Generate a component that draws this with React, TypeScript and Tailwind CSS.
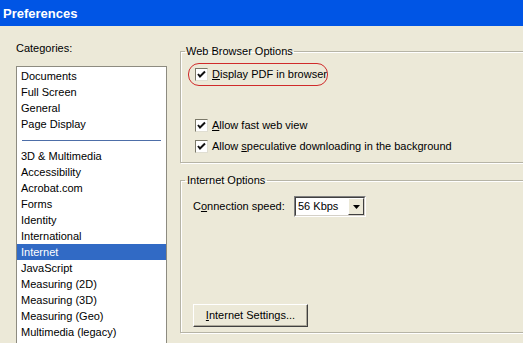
import React from 'react';

const groupA = ['Documents', 'Full Screen', 'General', 'Page Display'];
const groupB = [
  '3D & Multimedia',
  'Accessibility',
  'Acrobat.com',
  'Forms',
  'Identity',
  'International',
  'Internet',
  'JavaScript',
  'Measuring (2D)',
  'Measuring (3D)',
  'Measuring (Geo)',
  'Multimedia (legacy)',
  'Multimedia Trust (legacy)',
];

function CheckBox() {
  return (
    <span className="w-[13px] h-[13px] shrink-0 bg-white border border-t-[#7a7868] border-l-[#7a7868] border-b-[#e0ded2] border-r-[#e0ded2] flex items-center justify-center">
      <svg width="9" height="9" viewBox="0 0 9 9">
        <path d="M1 4 L3 6.5 L8 1.5" fill="none" stroke="#111" strokeWidth="2" />
      </svg>
    </span>
  );
}

function Label({ pre, u, post }: { pre: string; u: string; post: string }) {
  return (
    <span className="whitespace-nowrap">
      {pre}
      <span className="underline underline-offset-[1px]">{u}</span>
      {post}
    </span>
  );
}

export default function App() {
  return (
    <div
      className="w-[523px] h-[343px] overflow-hidden bg-[#ECE9D8] text-[11px] leading-[13px] text-black"
      style={{ fontFamily: '"Liberation Sans", Arial, sans-serif' }}
    >
      <div className="h-[26px] bg-[#0055E5] flex items-center pl-[3px]">
        <span className="text-white font-bold text-[13px]">Preferences</span>
      </div>

      <div className="flex w-[640px]">
        {/* categories */}
        <div className="pl-[16px] w-[180px] shrink-0">
          <div className="pt-[16px] h-[40px]">Categories:</div>
          <div className="w-[151px] h-[300px] bg-white border border-[#8d8b80] pt-[1px]">
            {groupA.map((c) => (
              <div key={c} className="h-[16px] leading-[16px] pl-[4px]">
                {c}
              </div>
            ))}
            <div className="h-[16px] flex items-center px-[5px]">
              <div className="h-px w-full bg-[#4d6ea8]" />
            </div>
            {groupB.map((c) => (
              <div
                key={c}
                className={`h-[16px] leading-[16px] pl-[4px] ${c === 'Internet' ? 'bg-[#316AC5] text-white' : ''}`}
              >
                {c}
              </div>
            ))}
          </div>
        </div>

        {/* options */}
        <div className="w-[420px] shrink-0 pt-[19px]">
          <fieldset className="border border-[#b6b4a6] shadow-[inset_1px_1px_0_#fff,1px_1px_0_#fff]">
            <legend className="ml-[4px] px-[1px] leading-[13px]">Web Browser Options</legend>
            <div className="pt-[5px] pb-[8px]">
              <div className="ml-[7px] w-[140px] h-[23px] rounded-[11px] border border-[#d02a2a] flex items-center gap-[4px] pl-[6px]">
                <CheckBox />
                <Label pre="" u="D" post="isplay PDF in browser" />
              </div>
              <div className="mt-[31px] pl-[14px] flex flex-col gap-[5px]">
                <div className="h-[16px] flex items-center gap-[4px]">
                  <CheckBox />
                  <Label pre="" u="A" post="llow fast web view" />
                </div>
                <div className="h-[16px] flex items-center gap-[4px]">
                  <CheckBox />
                  <Label pre="Allow " u="s" post="peculative downloading in the background" />
                </div>
              </div>
            </div>
          </fieldset>

          <fieldset className="mt-[11px] border border-[#b6b4a6] shadow-[inset_1px_1px_0_#fff,1px_1px_0_#fff]">
            <legend className="ml-[4px] px-[2px] leading-[13px]">Internet Options</legend>
            <div className="pt-[9px] pb-[5px] pl-[12px]">
              <div className="flex items-center">
                <span className="w-[101px]">
                  <Label pre="C" u="o" post="nnection speed:" />
                </span>
                <div className="w-[72px] h-[21px] bg-white border border-t-[#808080] border-l-[#808080] border-b-white border-r-white flex items-center">
                  <div className="flex-1 h-full border border-t-[#404040] border-l-[#404040] border-b-[#d4d0c8] border-r-[#d4d0c8] flex items-center justify-between pl-[2px]">
                    <span>56 Kbps</span>
                    <span className="w-[16px] h-[17px] bg-[#ECE9D8] border border-t-white border-l-white border-b-[#404040] border-r-[#404040] flex items-center justify-center">
                      <svg width="7" height="4" viewBox="0 0 7 4">
                        <path d="M0 0 H7 L3.5 4 Z" fill="#000" />
                      </svg>
                    </span>
                  </div>
                </div>
              </div>
              <div className="mt-[87px] w-[115px] h-[23px] bg-[#ECE9D8] border border-t-white border-l-white border-b-[#404040] border-r-[#404040] shadow-[inset_-1px_-1px_0_#aca899] flex items-center justify-center">
                <Label pre="" u="I" post="nternet Settings..." />
              </div>
            </div>
          </fieldset>
        </div>
      </div>
    </div>
  );
}
